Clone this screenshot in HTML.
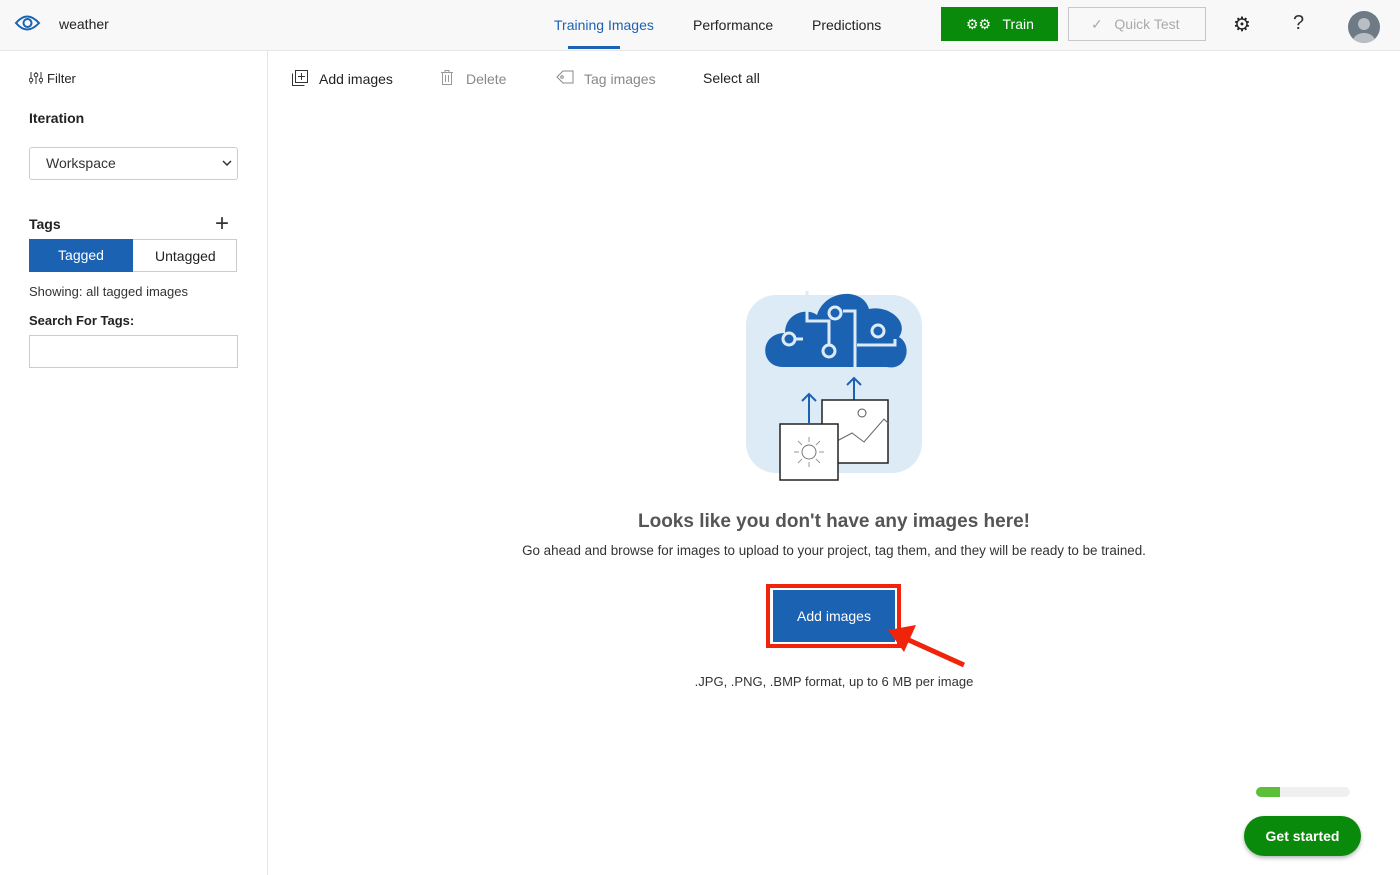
<!DOCTYPE html>
<html><head><meta charset="utf-8"><style>
*{box-sizing:border-box;margin:0;padding:0}
body{width:1400px;height:875px;overflow:hidden;background:#fff;font-family:"Liberation Sans",sans-serif;color:#222;position:relative}
.abs{position:absolute}
.hdr{left:0;top:0;width:1400px;height:51px;background:#f8f8f8;border-bottom:1px solid #e6e6e6}
.t{position:absolute;white-space:nowrap}
</style></head><body>
<div class="abs hdr"></div>
<svg class="abs" style="left:14px;top:12px" width="27" height="22" viewBox="0 0 27 22"><path d="M2 11 Q13 -2 25 11 Q13 24 2 11Z" fill="none" stroke="#1b62b3" stroke-width="2"/><circle cx="13.5" cy="11" r="4" fill="none" stroke="#1b62b3" stroke-width="2"/></svg>
<div class="t" style="left:59px;top:16px;font-size:14px">weather</div>
<div class="t" style="left:554px;top:17px;font-size:14px;color:#1b62b3">Training Images</div>
<div class="abs" style="left:568px;top:46px;width:52px;height:3px;background:#1b62b3"></div>
<div class="t" style="left:693px;top:17px;font-size:14px">Performance</div>
<div class="t" style="left:812px;top:17px;font-size:14px">Predictions</div>
<div class="abs" style="left:941px;top:7px;width:117px;height:34px;background:#0a8a0a;color:#fff;font-size:14px;line-height:34px;padding-left:25px">⚙⚙ &nbsp; Train</div>
<div class="abs" style="left:1068px;top:7px;width:138px;height:34px;border:1px solid #c8c8c8;color:#aaa;font-size:14px;line-height:32px;padding-left:22px">✓ &nbsp; Quick Test</div>
<div class="t" style="left:1233px;top:12px;font-size:20px">⚙</div>
<div class="t" style="left:1293px;top:12px;font-size:20px;color:#333">?</div>
<svg class="abs" style="left:1348px;top:11px" width="32" height="32" viewBox="0 0 32 32"><defs><clipPath id="c"><circle cx="16" cy="16" r="16"/></clipPath></defs><circle cx="16" cy="16" r="16" fill="#6e7a85"/><g clip-path="url(#c)"><circle cx="16" cy="13" r="6" fill="#b8bec4"/><ellipse cx="16" cy="30" rx="11" ry="8" fill="#b8bec4"/></g></svg>

<div class="abs" style="left:267px;top:51px;width:1px;height:824px;background:#e6e6e6"></div>
<svg class="abs" style="left:29px;top:71px" width="14" height="14" viewBox="0 0 14 14" fill="none" stroke="#333"><path d="M2 1v12M7 1v12M12 1v12"/><circle cx="2" cy="9" r="1.8" fill="#fff"/><circle cx="7" cy="4" r="1.8" fill="#fff"/><circle cx="12" cy="9" r="1.8" fill="#fff"/></svg>
<div class="t" style="left:47px;top:71px;font-size:13px">Filter</div>
<div class="t" style="left:29px;top:110px;font-size:14px;font-weight:bold">Iteration</div>
<div class="abs" style="left:29px;top:147px;width:209px;height:33px;border:1px solid #ccc;border-radius:3px;font-size:14px;line-height:31px;padding-left:16px;color:#333">Workspace<svg style="position:absolute;right:5px;top:12px" width="10" height="7"><path d="M1 1l4 4 4-4" fill="none" stroke="#333" stroke-width="1.5"/></svg></div>
<div class="t" style="left:29px;top:216px;font-size:14px;font-weight:bold">Tags</div>
<div class="t" style="left:215px;top:210px;font-size:24px;font-weight:300;color:#333">+</div>
<div class="abs" style="left:29px;top:239px;width:208px;height:33px;border:1px solid #ccc"></div>
<div class="abs" style="left:29px;top:239px;width:104px;height:33px;background:#1b62b3;color:#fff;font-size:14px;line-height:33px;text-align:center">Tagged</div>
<div class="t" style="left:155px;top:248px;font-size:14px">Untagged</div>
<div class="t" style="left:29px;top:284px;font-size:13px;color:#333">Showing: all tagged images</div>
<div class="t" style="left:29px;top:313px;font-size:13px;font-weight:bold">Search For Tags:</div>
<div class="abs" style="left:29px;top:335px;width:209px;height:33px;border:1px solid #ccc"></div>

<svg class="abs" style="left:292px;top:70px" width="16" height="16" viewBox="0 0 16 16" fill="none" stroke="#333"><rect x="3.5" y="0.5" width="12" height="12"/><path d="M0.5 3.5V15.5H12.5M9.5 3v7M6 6.5h7"/></svg>
<div class="t" style="left:319px;top:71px;font-size:14px">Add images</div>
<svg class="abs" style="left:441px;top:70px" width="12" height="15" viewBox="0 0 12 15" fill="none" stroke="#999"><path d="M0 2.5h12M4 2.5V0.5h4v2M1.5 2.5v12h9v-12M4.5 5v7M7.5 5v7"/></svg>
<div class="t" style="left:466px;top:71px;font-size:14px;color:#888">Delete</div>
<svg class="abs" style="left:556px;top:70px" width="18" height="14" viewBox="0 0 18 14" fill="none" stroke="#888"><path d="M1 7L7 1h10v12H7Z"/><circle cx="6" cy="7" r="1.3"/></svg>
<div class="t" style="left:584px;top:71px;font-size:14px;color:#888">Tag images</div>
<div class="t" style="left:703px;top:70px;font-size:14px">Select all</div>

<svg class="abs" style="left:745px;top:291px" width="180" height="190" viewBox="0 0 180 190">
<rect x="1" y="4" width="176" height="178" rx="30" fill="#ddebf7"/>
<path d="M38 76 C14 76 14 42 40 42 C40 22 62 16 72 24 C80 -2 118 -4 124 18 C146 14 164 32 154 46 C168 54 162 80 142 76 Z" fill="#1b62b3"/>
<g stroke="#ddebf7" stroke-width="3" fill="none"><path d="M62 0V30h22V54M98 20h12V80M150 48V54H112M50 48H58"/></g>
<g fill="#1b62b3" stroke="#ddebf7" stroke-width="3"><circle cx="44" cy="48" r="6"/><circle cx="84" cy="60" r="6"/><circle cx="90" cy="22" r="6"/><circle cx="133" cy="40" r="6"/></g>
<g stroke="#1b62b3" stroke-width="2" fill="none"><path d="M64 132V103M57 110l7-7 7 7M109 110V87M102 94l7-7 7 7"/></g>
<rect x="77" y="109" width="66" height="63" fill="#fff" stroke="#222" stroke-width="1.5"/>
<circle cx="117" cy="122" r="4" fill="none" stroke="#555"/>
<path d="M92 150l15-8 12 9 20-23 5 5" fill="none" stroke="#666"/>
<rect x="35" y="133" width="58" height="56" fill="#fff" stroke="#222" stroke-width="1.5"/>
<circle cx="64" cy="161" r="7" fill="none" stroke="#777"/>
<g stroke="#999"><path d="M64 146v5M64 171v5M49 161h5M74 161h5M53 150l4 4M75 150l-4 4M53 172l4-4M75 172l-4-4"/></g>
</svg>
<div class="t" style="left:0;width:1668px;text-align:center;top:511px;font-size:19px;font-weight:bold;color:#555">Looks like you don't have any images here!</div>
<div class="t" style="left:0;width:1668px;text-align:center;top:543px;font-size:13.4px;color:#333">Go ahead and browse for images to upload to your project, tag them, and they will be ready to be trained.</div>
<div class="abs" style="left:766px;top:584px;width:135px;height:64px;border:4px solid #f0240a"></div>
<div class="abs" style="left:773px;top:590px;width:122px;height:52px;background:#1b62b3;color:#fff;font-size:14px;line-height:52px;text-align:center">Add images</div>
<svg class="abs" style="left:880px;top:620px" width="90" height="50"><path d="M84 45L22 17" stroke="#f0240a" stroke-width="5"/><path d="M8 10L36 5L24 32Z" fill="#f0240a"/></svg>
<div class="t" style="left:0;width:1668px;text-align:center;top:674px;font-size:13px;color:#333">.JPG, .PNG, .BMP format, up to 6 MB per image</div>

<div class="abs" style="left:1256px;top:787px;width:94px;height:10px;border-radius:5px;background:#f0f0f0"></div>
<div class="abs" style="left:1256px;top:787px;width:24px;height:10px;border-radius:5px 0 0 5px;background:#5cbf3a"></div>
<div class="abs" style="left:1244px;top:816px;width:117px;height:40px;border-radius:20px;background:#0a8a0a;color:#fff;font-size:14px;font-weight:bold;line-height:40px;text-align:center;box-shadow:0 2px 4px rgba(0,0,0,.3)">Get started</div>
</body></html>
